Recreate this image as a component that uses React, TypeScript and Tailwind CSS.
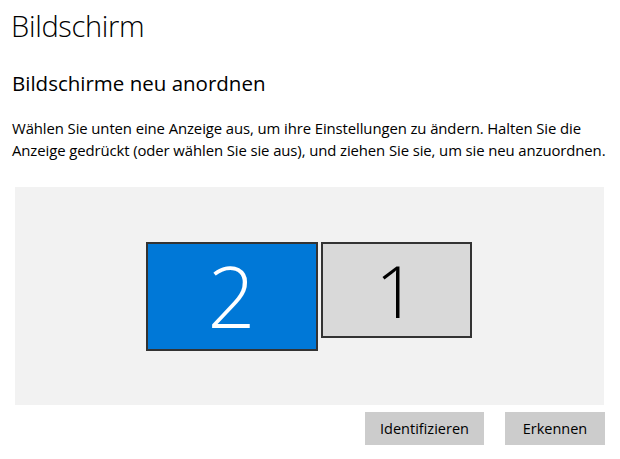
import React from "react";

export default function App() {
  const font = { fontFamily: '"Open Sans", "Noto Sans", sans-serif' };
  return (
    <div className="w-[620px] h-[459px] bg-white text-black overflow-hidden" style={font}>
      <div className="pl-[11px] pt-[6px]">
        <h1 className="text-[29px] font-light leading-[40px] tracking-[-0.3px]">Bildschirm</h1>
      </div>
      <div className="pl-[12px] mt-[23px]">
        <h2 className="text-[20.5px] font-normal leading-[28px]">Bildschirme neu anordnen</h2>
      </div>
      <p className="pl-[12px] mt-[20px] text-[14.9px] leading-[22px] tracking-[-0.1px]">
        Wählen Sie unten eine Anzeige aus, um ihre Einstellungen zu ändern. Halten Sie die
        <br />
        Anzeige gedrückt (oder wählen Sie sie aus), und ziehen Sie sie, um sie neu anzuordnen.
      </p>
      <div className="ml-[15px] mt-[26px] w-[589px] h-[218px] bg-[#f2f2f2] flex items-center justify-center">
        <div className="flex items-start gap-[3px] -translate-x-[1px]">
          <div className="w-[172px] h-[109px] bg-[#0078d7] border-2 border-[#333333] flex items-center justify-center">
            <span className="text-white text-[84px] font-light leading-none">2</span>
          </div>
          <div className="w-[151px] h-[96px] bg-[#d9d9d9] border-2 border-[#333333] flex items-center justify-center">
            <span className="text-black text-[72px] font-light leading-none">1</span>
          </div>
        </div>
      </div>
      <div className="flex justify-end gap-[21px] pr-[15px] mt-[7px]">
        <button className="w-[119px] h-[33px] bg-[#cccccc] text-[14.5px] text-black">Identifizieren</button>
        <button className="w-[100px] h-[33px] bg-[#cccccc] text-[14.5px] text-black">Erkennen</button>
      </div>
    </div>
  );
}
